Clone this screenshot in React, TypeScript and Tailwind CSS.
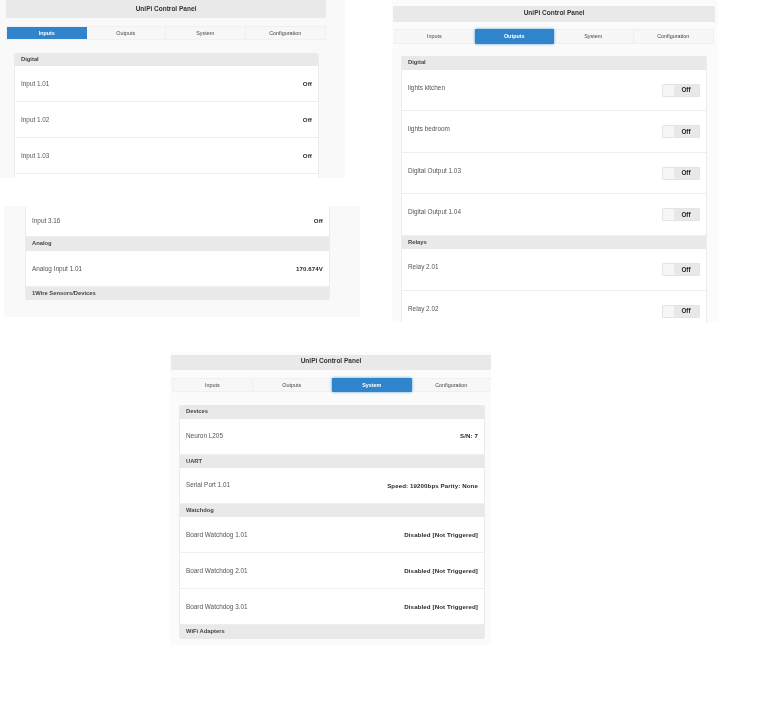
const TABS = ["Inputs", "Outputs", "System", "Configuration"];

type Row = { label: string; value: string; toggle?: boolean; h: string };
type Item = { header: string; last?: boolean } | Row;

function Header({ lifted }: { lifted?: boolean }) {
  return (
    <div
      className={
        lifted
          ? "flex h-full items-center justify-center bg-[#e9e9e9] pb-[3px] text-[6.5px] font-bold text-[#333]"
          : "flex h-full items-center justify-center bg-[#e9e9e9] text-[6.5px] font-bold text-[#333]"
      }
    >
      UniPi Control Panel
    </div>
  );
}

function Tabs({ active, raised }: { active: number; raised?: boolean }) {
  return (
    <div className="grid h-full grid-cols-4 border border-[#f0f0f0] bg-[#f7f7f7]">
      {TABS.map((tab, i) => (
        <div
          key={tab}
          className={
            i === active
              ? raised
                ? "z-10 -my-px flex items-center justify-center rounded-[1px] bg-[#2f84cc] text-[5.4px] font-bold text-white shadow-[0_0_3px_#5a9fd8]"
                : "flex items-center justify-center bg-[#2f84cc] text-[5.4px] font-bold text-white"
              : "flex items-center justify-center border-r border-[#eeeeee] text-[5.4px] text-[#444] last:border-r-0"
          }
        >
          {tab}
        </div>
      ))}
    </div>
  );
}

function Toggle() {
  return (
    <div className="flex h-[13px] w-[38px] items-center rounded-[1px] border border-[#e4e4e4] bg-[#e8e8e8]">
      <div className="h-full w-[11px] bg-[#f6f6f6]" />
      <div className="flex-1 pr-px text-center text-[6.4px] font-bold text-[#222]">Off</div>
    </div>
  );
}

function List({ items }: { items: Item[] }) {
  return (
    <div className="overflow-hidden rounded-[2px] border-x border-[#ececec] bg-white">
      {items.map((item, i) =>
        "header" in item ? (
          <div
            key={i}
            className="flex h-[13.5px] items-center bg-[#e9e9e9] pl-[6px] text-[5.8px] font-bold text-[#444]"
          >
            {item.header}
          </div>
        ) : (
          <div
            key={i}
            className={
              item.h +
              " flex justify-between border-b border-[#eeeeee] px-[6px] last:border-b-0 " +
              (item.toggle ? "items-start" : "items-center")
            }
          >
            <span className={item.toggle ? "mt-[14px] text-[6.4px] leading-[8px] text-[#555]" : "text-[6.4px] text-[#555]"}>
              {item.label}
            </span>
            {item.toggle ? (
              <div className="mt-[14px]">
                <Toggle />
              </div>
            ) : (
              <span className="text-[6.15px] font-bold tracking-[0.1px] text-[#2a2a2a]">{item.value}</span>
            )}
          </div>
        )
      )}
    </div>
  );
}

const INPUT_ROW = "h-[36px]";
const OUTPUT_ROW = "h-[41.5px]";

export default function App() {
  return (
    <div className="relative h-[714px] w-[760px] overflow-hidden bg-white font-['Liberation_Sans',Arial,sans-serif] blur-[0.35px]">
      {/* Inputs, top of the page */}
      <section className="absolute top-0 left-0 h-[178px] w-[345px] overflow-hidden bg-[#f9f9f9]">
        <div className="ml-[6px] h-[18px] w-[320px]">
          <Header />
        </div>
        <div className="mt-[8px] ml-[6px] h-[14px] w-[320px]">
          <Tabs active={0} />
        </div>
        <div className="mt-[12.5px] ml-[14px] w-[305px]">
          <List
            items={[
              { header: "Digital" },
              { label: "Input 1.01", value: "Off", h: INPUT_ROW },
              { label: "Input 1.02", value: "Off", h: INPUT_ROW },
              { label: "Input 1.03", value: "Off", h: INPUT_ROW },
              { label: "", value: "", h: INPUT_ROW },
            ]}
          />
        </div>
      </section>

      {/* Inputs, scrolled to the bottom */}
      <section className="absolute top-[206px] left-[4px] h-[111px] w-[356px] bg-[#f9f9f9]">
        <div className="ml-[21px] w-[305px]">
          <List
            items={[
              { label: "Input 3.16", value: "Off", h: "h-[31px]" },
              { header: "Analog" },
              { label: "Analog Input 1.01", value: "170.674V", h: "h-[36px] pt-px" },
              { header: "1Wire Sensors/Devices", last: true },
            ]}
          />
        </div>
      </section>

      {/* Outputs */}
      <section className="absolute top-0 left-[392px] h-[322px] w-[326px] overflow-hidden bg-[#fbfbfb]">
        <div className="mt-[6px] ml-px h-[16px] w-[322px]">
          <Header lifted />
        </div>
        <div className="mt-[7px] ml-[2px] h-[15px] w-[320px]">
          <Tabs active={1} raised />
        </div>
        <div className="mt-[12px] ml-[9px] w-[306px]">
          <List
            items={[
              { header: "Digital" },
              { label: "lights kitchen", value: "Off", toggle: true, h: OUTPUT_ROW },
              { label: "lights bedroom", value: "Off", toggle: true, h: OUTPUT_ROW },
              { label: "Digital Output 1.03", value: "Off", toggle: true, h: OUTPUT_ROW },
              { label: "Digital Output 1.04", value: "Off", toggle: true, h: OUTPUT_ROW },
              { header: "Relays" },
              { label: "Relay 2.01", value: "Off", toggle: true, h: OUTPUT_ROW },
              { label: "Relay 2.02", value: "Off", toggle: true, h: OUTPUT_ROW },
            ]}
          />
        </div>
      </section>

      {/* System */}
      <section className="absolute top-[352px] left-[170px] h-[293px] w-[321px] overflow-hidden bg-[#fbfbfb]">
        <div className="mt-[3px] ml-px h-[15px] w-[320px]">
          <Header lifted />
        </div>
        <div className="mt-[8px] ml-[2px] h-[14px] w-[320px]">
          <Tabs active={2} raised />
        </div>
        <div className="mt-[13px] ml-[9px] w-[306px]">
          <List
            items={[
              { header: "Devices" },
              { label: "Neuron L205", value: "S/N: 7", h: INPUT_ROW },
              { header: "UART" },
              { label: "Serial Port 1.01", value: "Speed: 19200bps Parity: None", h: "h-[35.5px]" },
              { header: "Watchdog" },
              { label: "Board Watchdog 1.01", value: "Disabled [Not Triggered]", h: INPUT_ROW },
              { label: "Board Watchdog 2.01", value: "Disabled [Not Triggered]", h: INPUT_ROW },
              { label: "Board Watchdog 3.01", value: "Disabled [Not Triggered]", h: INPUT_ROW },
              { header: "WiFi Adapters", last: true },
            ]}
          />
        </div>
      </section>
    </div>
  );
}
